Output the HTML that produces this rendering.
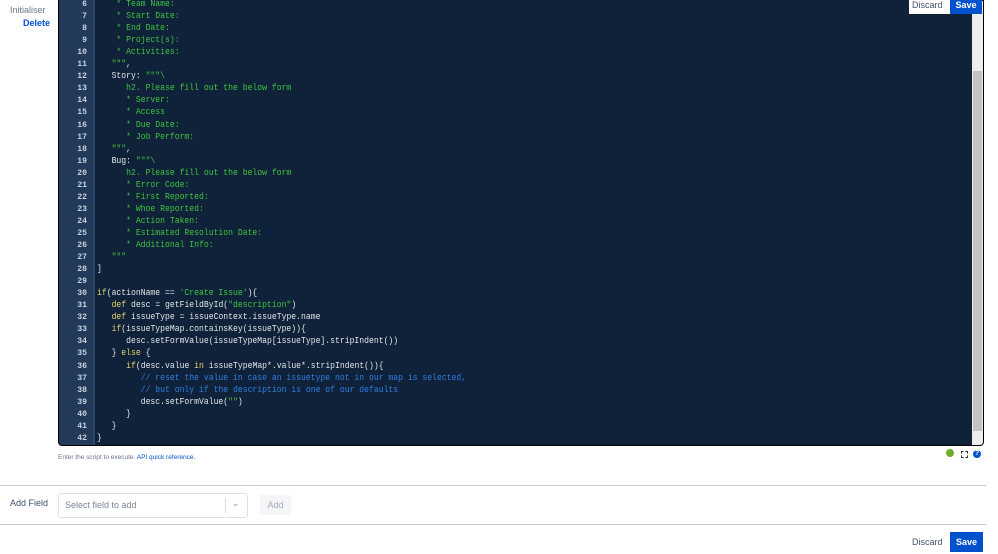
<!DOCTYPE html>
<html><head><style>
body{margin:0;width:998px;height:554px;background:#fff;font-family:"Liberation Sans",sans-serif;position:relative;overflow:hidden}
.ed{position:absolute;left:58px;top:-6px;width:924px;height:450px;background:#0f2239;border:1px solid #000;border-radius:0 0 4px 4px;overflow:hidden}
.gut{position:absolute;left:0;top:0;width:34px;height:100%;background:#22395a;border-right:2px solid #2c4668}
.ln{position:absolute;left:0;width:28px;text-align:right;color:#c9d3de;font:bold 8.1px "Liberation Mono",monospace;line-height:12px}
.cd{position:absolute;left:38px;white-space:pre;color:#e2e6ea;font:8.1px "Liberation Mono",monospace;line-height:12px;transform:scaleY(1.12);transform-origin:0 50%}
.g{color:#3fc43f}.k{color:#e5d36e}.c{color:#2e7fe6}
.sb{position:absolute;right:0;top:6px;width:11px;height:445px;background:#ededed}
.th{position:absolute;right:1px;top:70px;width:9px;height:360px;background:#c3c3c3}
</style></head><body>
<div style="position:absolute;left:10px;top:5px;font-size:9px;color:#6b778c">Initialiser</div>
<div style="position:absolute;left:23px;top:18px;font-size:9px;color:#0052cc;font-weight:bold">Delete</div>
<div class="ed">
<div class="gut"></div>
<div id="L"></div>
<div class="sb"><div class="th"></div></div>
</div>
<div style="position:absolute;left:909px;top:0;width:41px;height:14px;background:#fff;color:#42526e;font-size:9px;line-height:11px;padding-left:3px">Discard</div>
<div style="position:absolute;left:950px;top:0;width:32px;height:14px;background:#0052cc;color:#fff;font-size:9px;font-weight:bold;line-height:11px;text-align:center">Save</div>
<div style="position:absolute;left:58px;top:454px;font-size:6.5px;color:#6b778c">Enter the script to execute. <span style="color:#0052cc">API quick reference.</span></div>
<div style="position:absolute;left:946px;top:449px;width:8px;height:8px;border-radius:50%;background:#6fae2a"></div>
<div style="position:absolute;left:961px;top:451px;width:5px;height:5px;border:1px dashed #333"></div>
<div style="position:absolute;left:973px;top:450px;width:8px;height:8px;border-radius:50%;background:#0052cc;color:#fff;font-size:7px;font-weight:bold;text-align:center;line-height:8px">?</div>
<div style="position:absolute;left:0;top:485px;width:986px;height:1px;background:#ccc"></div>
<div style="position:absolute;left:10px;top:498px;font-size:9px;color:#42526e">Add Field</div>
<div style="position:absolute;left:58px;top:493px;width:188px;height:23px;border:1px solid #dfe1e6;border-radius:3px"><span style="position:absolute;left:6px;top:6px;font-size:9px;color:#7a869a">Select field to add</span><span style="position:absolute;left:166px;top:4px;width:1px;height:15px;background:#ddd"></span><span style="position:absolute;left:173px;top:4px;font-size:9px;color:#999">⌄</span></div>
<div style="position:absolute;left:260px;top:495px;width:31px;height:20px;background:#f4f5f7;color:#a5adba;font-size:9px;text-align:center;line-height:20px">Add</div>
<div style="position:absolute;left:0;top:524px;width:986px;height:1px;background:#ccc"></div>
<div style="position:absolute;left:912px;top:537px;font-size:9px;color:#42526e">Discard</div>
<div style="position:absolute;left:950px;top:532px;width:33px;height:20px;background:#0052cc;color:#fff;font-size:9px;font-weight:bold;text-align:center;line-height:20px">Save</div>
<script>
var L=[
[6,'<span class="g">    * Team Name:</span>'],
[7,'<span class="g">    * Start Date:</span>'],
[8,'<span class="g">    * End Date:</span>'],
[9,'<span class="g">    * Project(s):</span>'],
[10,'<span class="g">    * Activities:</span>'],
[11,'   <span class="g">"""</span>,'],
[12,'   Story: <span class="g">"""\\</span>'],
[13,'<span class="g">      h2. Please fill out the below form</span>'],
[14,'<span class="g">      * Server:</span>'],
[15,'<span class="g">      * Access</span>'],
[16,'<span class="g">      * Due Date:</span>'],
[17,'<span class="g">      * Job Perform:</span>'],
[18,'   <span class="g">"""</span>,'],
[19,'   Bug: <span class="g">"""\\</span>'],
[20,'<span class="g">      h2. Please fill out the below form</span>'],
[21,'<span class="g">      * Error Code:</span>'],
[22,'<span class="g">      * First Reported:</span>'],
[23,'<span class="g">      * Whoe Reported:</span>'],
[24,'<span class="g">      * Action Taken:</span>'],
[25,'<span class="g">      * Estimated Resolution Date:</span>'],
[26,'<span class="g">      * Additional Info:</span>'],
[27,'   <span class="g">"""</span>'],
[28,']'],[29,''],
[30,'<span class="k">if</span>(actionName == <span class="g">\'Create Issue\'</span>){'],
[31,'   <span class="k">def</span> desc = getFieldById(<span class="g">"description"</span>)'],
[32,'   <span class="k">def</span> issueType = issueContext.issueType.name'],
[33,'   <span class="k">if</span>(issueTypeMap.containsKey(issueType)){'],
[34,'      desc.setFormValue(issueTypeMap[issueType].stripIndent())'],
[35,'   } <span class="k">else</span> {'],
[36,'      <span class="k">if</span>(desc.value <span class="k">in</span> issueTypeMap*.value*.stripIndent()){'],
[37,'<span class="c">         // reset the value in case an issuetype not in our map is selected,</span>'],
[38,'<span class="c">         // but only if the description is one of our defaults</span>'],
[39,'         desc.setFormValue(<span class="g">""</span>)'],
[40,'      }'],[41,'   }'],[42,'}']];
var h='';L.forEach(function(a){var t=(4+(a[0]-6)*12.05).toFixed(2);
h+='<div class="ln" style="top:'+t+'px">'+a[0]+'</div><div class="cd" style="top:'+t+'px">'+a[1]+'</div>';});
document.getElementById('L').innerHTML=h;
</script>
</body></html>
